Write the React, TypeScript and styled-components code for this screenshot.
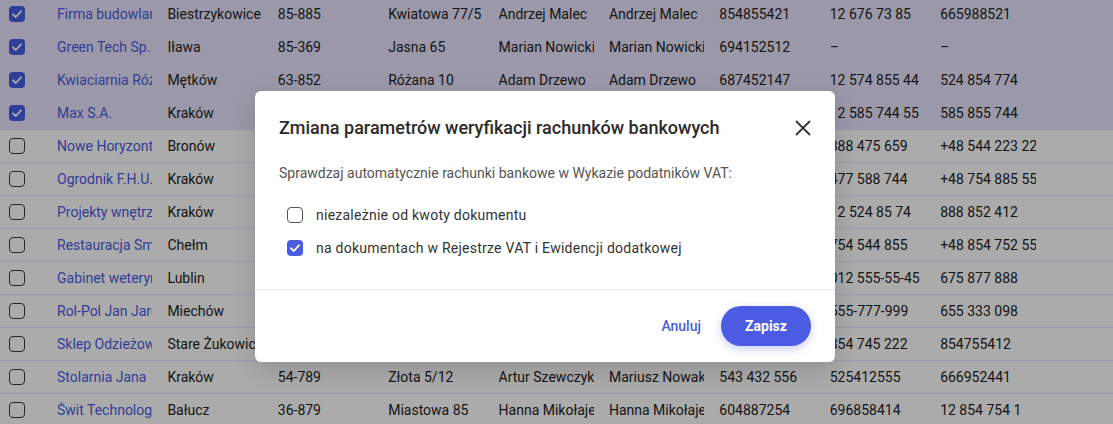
import React from 'react';
import styled, { createGlobalStyle } from 'styled-components';

const primary = '#4b5be2';

const GlobalStyle = createGlobalStyle`
  html, body {
    margin: 0;
    padding: 0;
    background: #fff;
    font-family: Roboto, 'Liberation Sans', sans-serif;
    overflow: hidden;
  }
`;

const Page = styled.div`
  position: relative;
  width: 1113px;
  height: 424px;
  overflow: hidden;
`;

const TableBody = styled.div`
  display: flex;
  flex-direction: column;
  margin-top: -2px;
`;

const Row = styled.div<{ $selected?: boolean }>`
  display: grid;
  grid-template-columns: 57px repeat(9, 110.4px);
  align-items: center;
  height: 33px;
  box-sizing: border-box;
  border-bottom: 1px solid #e6e3f8;
  background: ${(p) => (p.$selected ? '#e7e4fc' : '#fff')};
  font-size: 14px;
  color: #222;
`;

const Cell = styled.div<{ $link?: boolean }>`
  margin-right: 15px;
  min-width: 0;
  overflow: hidden;
  white-space: nowrap;
  text-overflow: clip;
  color: ${(p) => (p.$link ? primary : '#222')};
`;

const CheckCell = styled.div`
  display: flex;
  align-items: center;
  padding-left: 9px;
`;

const Box = styled.span<{ $checked?: boolean; $muted?: boolean }>`
  display: inline-flex;
  align-items: center;
  justify-content: center;
  width: 16px;
  height: 16px;
  box-sizing: border-box;
  border-radius: 4px;
  border: ${(p) => (p.$checked ? 'none' : `1.5px solid ${p.$muted ? '#555' : '#3a3a3a'}`)};
  background: ${(p) => (p.$checked ? primary : 'transparent')};
  flex-shrink: 0;
`;

const Overlay = styled.div`
  position: absolute;
  inset: 0;
  background: rgba(0, 0, 0, 0.33);
`;

const Modal = styled.div`
  position: absolute;
  left: 255px;
  top: 91px;
  width: 580px;
  background: #fff;
  border-radius: 6px;
  display: flex;
  flex-direction: column;
  box-shadow: 0 8px 24px rgba(0, 0, 0, 0.15);
`;

const Header = styled.div`
  display: flex;
  align-items: center;
  justify-content: space-between;
  padding: 24px 24px 0;
`;

const Title = styled.h2`
  margin: 0;
  font-size: 18px;
  line-height: 26px;
  font-weight: 500;
  color: #2b2b2b;
`;

const CloseButton = styled.button`
  border: none;
  background: none;
  padding: 0;
  width: 16px;
  height: 16px;
  display: flex;
  cursor: pointer;
`;

const Body = styled.div`
  padding: 22px 24px 25px;
  display: flex;
  flex-direction: column;
`;

const Lead = styled.p`
  margin: 0 0 15px;
  font-size: 14px;
  line-height: 20px;
  color: #555;
`;

const Option = styled.label`
  display: flex;
  align-items: center;
  gap: 13px;
  height: 33px;
  padding-left: 8px;
  font-size: 14px;
  letter-spacing: 0.25px;
  color: #333;
  cursor: pointer;
`;

const Divider = styled.div`
  height: 1px;
  background: #e6e3f8;
`;

const Footer = styled.div`
  display: flex;
  justify-content: flex-end;
  align-items: center;
  gap: 10px;
  padding: 16px 24px;
`;

const TextButton = styled.button`
  border: none;
  background: none;
  height: 40px;
  padding: 0 10px;
  font-family: inherit;
  font-size: 14px;
  font-weight: 500;
  color: ${primary};
  cursor: pointer;
`;

const PrimaryButton = styled.button`
  border: none;
  height: 40px;
  min-width: 90px;
  padding: 0 22px;
  border-radius: 20px;
  background: ${primary};
  color: #fff;
  font-family: inherit;
  font-size: 14px;
  font-weight: 700;
  box-shadow: 0 3px 8px rgba(75, 91, 226, 0.3);
  cursor: pointer;
`;

const Check = () => (
  <svg width="12" height="12" viewBox="0 0 12 12">
    <polyline points="2,6.3 4.8,9 10,3.3" fill="none" stroke="#fff" strokeWidth="1.8" strokeLinecap="round" strokeLinejoin="round" />
  </svg>
);

type Contractor = { sel: boolean; cells: string[] };

const rows: Contractor[] = [
  { sel: true, cells: ['Firma budowlana Malec', 'Biestrzykowice', '85-885', 'Kwiatowa 77/5', 'Andrzej Malec', 'Andrzej Malec', '854855421', '12 676 73 85', '665988521'] },
  { sel: true, cells: ['Green Tech Sp. z o.o.', 'Iława', '85-369', 'Jasna 65', 'Marian Nowicki', 'Marian Nowicki', '694152512', '–', '–'] },
  { sel: true, cells: ['Kwiaciarnia Różana', 'Mętków', '63-852', 'Różana 10', 'Adam Drzewo', 'Adam Drzewo', '687452147', '12 574 855 44', '524 854 774'] },
  { sel: true, cells: ['Max S.A.', 'Kraków', '30-001', 'Długa 12', 'Jan Kowalski', 'Jan Kowalski', '602123456', '12 585 744 55', '585 855 744'] },
  { sel: false, cells: ['Nowe Horyzonty', 'Bronów', '43-353', 'Polna 4', 'Ewa Nowak', 'Ewa Nowak', '601234567', '888 475 659', '+48 544 223 221'] },
  { sel: false, cells: ['Ogrodnik F.H.U.', 'Kraków', '31-542', 'Zielona 8', 'Piotr Zieliński', 'Piotr Zieliński', '698745632', '477 588 744', '+48 754 885 554'] },
  { sel: false, cells: ['Projekty wnętrz', 'Kraków', '30-415', 'Lipowa 3', 'Anna Wójcik', 'Anna Wójcik', '512478963', '12 524 85 74', '888 852 412'] },
  { sel: false, cells: ['Restauracja Smak', 'Chełm', '22-100', 'Rynek 2', 'Tomasz Lis', 'Tomasz Lis', '785412365', '754 544 855', '+48 854 752 554'] },
  { sel: false, cells: ['Gabinet weterynaryjny', 'Lublin', '20-001', 'Leśna 11', 'Maria Kot', 'Maria Kot', '665874123', '012 555-55-45', '675 877 888'] },
  { sel: false, cells: ['Rol-Pol Jan Jarosz', 'Miechów', '32-200', 'Polna 21', 'Jan Jarosz', 'Jan Jarosz', '600478521', '555-777-999', '655 333 098'] },
  { sel: false, cells: ['Sklep Odzieżowy', 'Stare Żukowice', '33-114', 'Szkolna 6', 'Ola Kruk', 'Ola Kruk', '789654123', '854 745 222', '854755412'] },
  { sel: false, cells: ['Stolarnia Jana', 'Kraków', '54-789', 'Złota 5/12', 'Artur Szewczyk', 'Mariusz Nowak', '543 432 556', '525412555', '666952441'] },
  { sel: false, cells: ['Świt Technologie', 'Bałucz', '36-879', 'Miastowa 85', 'Hanna Mikołajewska', 'Hanna Mikołajewska', '604887254', '696858414', '12 854 754 1'] },
];

const App: React.FC = () => {
  return (
    <Page>
      <GlobalStyle />
      <TableBody>
        {rows.map((r, i) => (
          <Row key={i} $selected={r.sel}>
            <CheckCell>
              <Box $checked={r.sel}>{r.sel && <Check />}</Box>
            </CheckCell>
            {r.cells.map((c, j) => (
              <Cell key={j} $link={j === 0}>
                {c}
              </Cell>
            ))}
          </Row>
        ))}
      </TableBody>
      <Overlay />
      <Modal>
        <Header>
          <Title>Zmiana parametrów weryfikacji rachunków bankowych</Title>
          <CloseButton aria-label="Zamknij">
            <svg width="16" height="16" viewBox="0 0 16 16">
              <path d="M1.5 1.5 L14.5 14.5 M14.5 1.5 L1.5 14.5" stroke="#333" strokeWidth="1.8" strokeLinecap="round" />
            </svg>
          </CloseButton>
        </Header>
        <Body>
          <Lead>Sprawdzaj automatycznie rachunki bankowe w Wykazie podatników VAT:</Lead>
          <Option>
            <Box $muted />
            niezależnie od kwoty dokumentu
          </Option>
          <Option>
            <Box $checked>
              <Check />
            </Box>
            na dokumentach w Rejestrze VAT i Ewidencji dodatkowej
          </Option>
        </Body>
        <Divider />
        <Footer>
          <TextButton>Anuluj</TextButton>
          <PrimaryButton>Zapisz</PrimaryButton>
        </Footer>
      </Modal>
    </Page>
  );
};

export default App;
